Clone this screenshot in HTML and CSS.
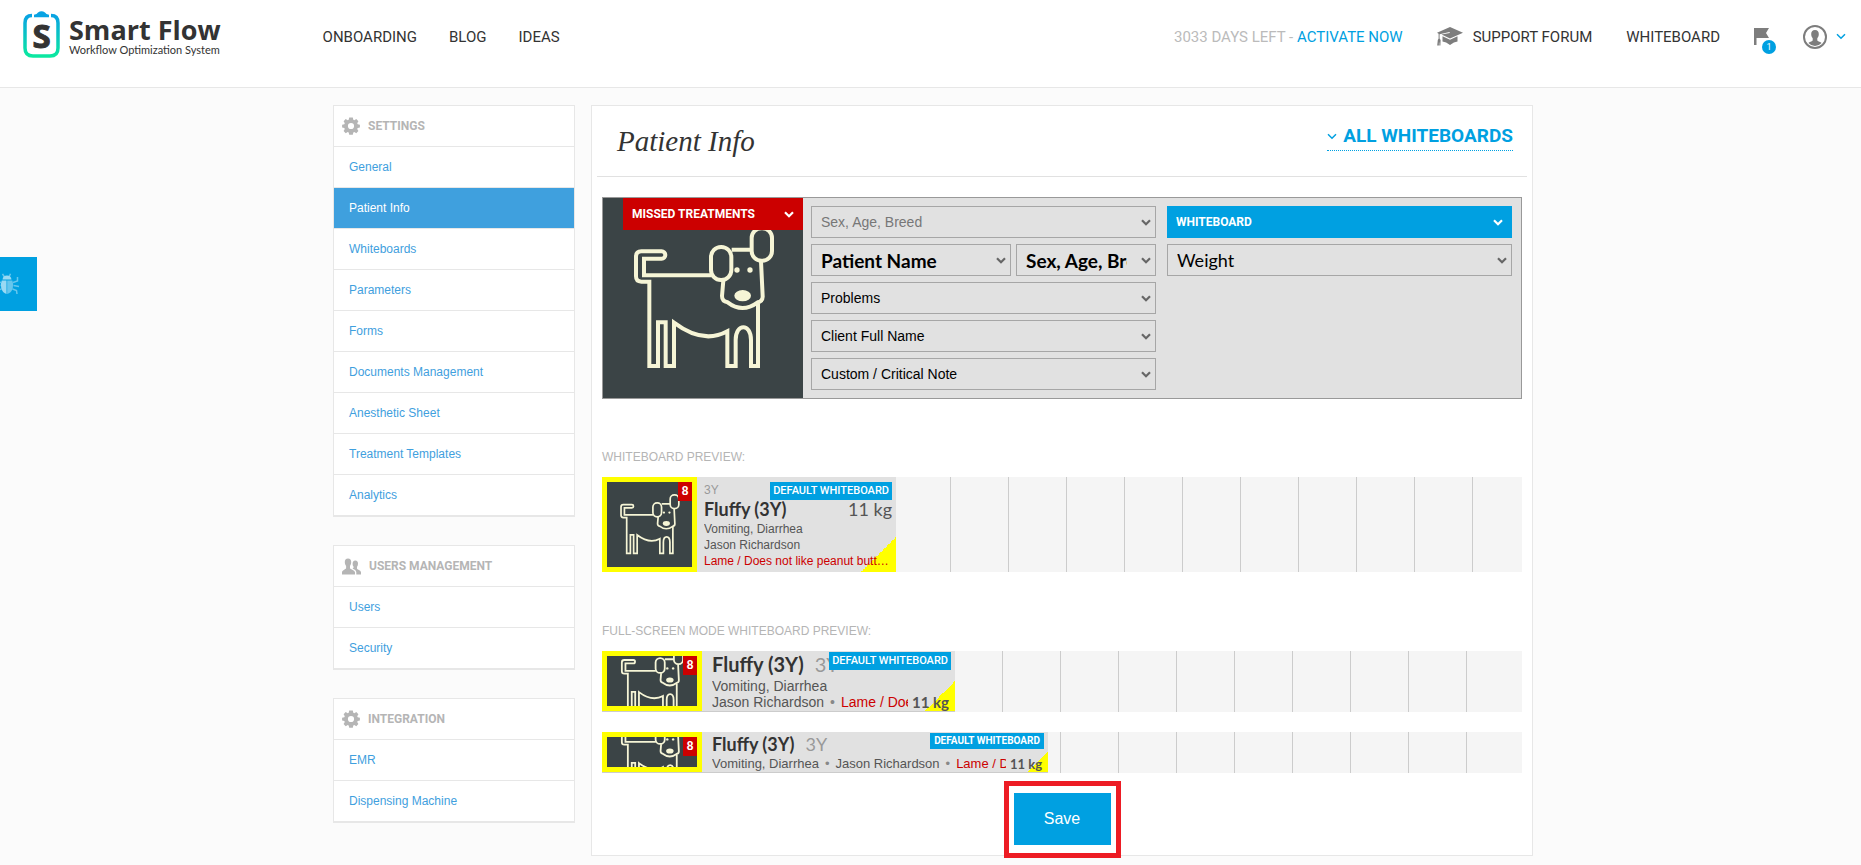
FILE: index.html
```html
<!DOCTYPE html>
<html lang="en">
<head>
    <meta charset="UTF-8">
    <meta name="viewport" content="width=device-width, initial-scale=1.0">
    <title>Smart Flow - Patient Info</title>
    <link rel="stylesheet" href="styles.css">
</head>
<body>
    <!-- Shared shapes -->
    <svg class="sprite" width="0" height="0" aria-hidden="true">
        <symbol id="chevron" viewBox="0 0 10 7">
            <path d="M1 1.2 5 5.2 9 1.2" fill="none" stroke="currentColor"/>
        </symbol>
        <symbol id="gear" viewBox="0 0 18 18">
            <path fill="currentColor" fill-rule="evenodd" d="M7.2 0.6h3.6l.5 2.2 1 .5 2-1.2 2.1 2.1-1.2 2 .5 1 2.2.5v2.9l-2.2.5-.5 1 1.2 2-2.1 2.1-2-1.2-1 .5-.5 2.2H7.2l-.5-2.2-1-.5-2 1.2-2.1-2.1 1.2-2-.5-1L.1 10.6V7.7l2.2-.5.5-1-1.2-2 2.1-2.1 2 1.2 1-.5zM9 5.9a3.1 3.1 0 1 0 0 6.200a3.1 3.1 0 0 0 0-6.200z"/>
        </symbol>
        <symbol id="people" viewBox="0 0 19 17">
            <path fill="currentColor" d="M6 0.500c2.200 0 3.300 1.500 3.200 3.700-.1 2-.7 2.900-1.200 3.700v2.400c.6 1.200 5 1.800 5 4.200V16.500H0v-2c0-2.400 3.600-3 4.100-4.200V7.900C3.500 7.100 2.900 6.200 2.800 4.200 2.700 2 3.800.5 6 .5z"/>
            <path fill="currentColor" d="M13.300 2.500c1.900 0 2.800 1.300 2.700 3.200-.1 1.700-.5 2.400-1 3.100v1.900c.6 1 4 1.600 4 3.600v2.200h-4.700v-2.200c0-2-2.100-2.900-3.700-3.700l1-1V8.800c-.5-.7-1-1.400-1-3.100 0-1.900.8-3.200 2.700-3.200z"/>
        </symbol>
        <symbol id="dog" viewBox="0 0 600 600" preserveAspectRatio="xMidYMid slice">
            <rect width="600" height="600" fill="#3b4446"/>
            <g fill="none" stroke="#f6f5d6" stroke-width="12" stroke-linejoin="miter">
                <path d="M465 316V504H444V426C444 375 398 375 398 426V504H373V400Q300 440 213 374V504H188V373H165V504H139V251H115Q99 251 99 235V176Q99 160 115 160H176A11 11 0 0 1 176 182H123V232H325"/>
                <path d="M386 155H446M474 190L479 294Q480 310 464 313Q418 347 374 313Q357 310 357 294L361 247"/>
                <rect x="324" y="147" width="61" height="99" rx="30"/>
                <rect x="446" y="91" width="61" height="97" rx="29"/>
            </g>
            <g fill="#f6f5d6">
                <circle cx="402" cy="216" r="8"/>
                <circle cx="441" cy="216" r="8"/>
                <ellipse cx="419" cy="293" rx="25" ry="17"/>
            </g>
        </symbol>
    </svg>

    <header class="header">
        <a class="logo" href="#">
            <svg class="logo-icon" width="37" height="47" viewBox="0 0 37 47" aria-hidden="true">
                <defs>
                    <linearGradient id="clip" x1="0" y1="0" x2="0" y2="1">
                        <stop offset="0" stop-color="#09a3e3"/>
                        <stop offset="1" stop-color="#0be8a0"/>
                    </linearGradient>
                </defs>
                <path d="M9 4.500Q2 4.500 2 12V37Q2 45 10 45H27Q35 45 35 37V12Q35 4.500 28 4.500" fill="none" stroke="url(#clip)" stroke-width="3.500"/>
                <path d="M11 6.200V3.800Q14 3.400 15 1.500Q18.500-1 22 1.500Q23 3.400 26 3.800V6.200z" fill="#09a3e3"/>
                <text x="18.500" y="37" class="logo-letter">S</text>
            </svg>
            <span class="logo-text">
                <span class="logo-name">Smart Flow</span>
                <span class="logo-tagline">Workflow Optimization System</span>
            </span>
        </a>
        <nav class="nav">
            <a href="#">ONBOARDING</a>
            <a href="#">BLOG</a>
            <a href="#">IDEAS</a>
        </nav>
        <div class="nav-right">
            <span class="trial">3033 DAYS LEFT - <a href="#">ACTIVATE NOW</a></span>
            <a class="support" href="#">
                <svg width="26" height="19" viewBox="0 0 26 19" fill="#7d7d7d" aria-hidden="true">
                    <path d="M13 0 26 5.700 13 11.500 4.500 7.600 12.800 6 12.600 5 2.600 7.200V11.500L3.600 13 3.400 18.500H2.300V15.500H1.900V18.500H.2L.8 13 1.600 11.500V6.800L0 5.700z"/>
                    <path d="M5.500 9.300 13 12.700 20.500 9.300V14.500Q17 14.800 13 18 9 14.800 5.500 14.500z"/>
                </svg>
                SUPPORT FORUM
            </a>
            <a href="#">WHITEBOARD</a>
            <button class="flag" type="button" aria-label="Notifications">
                <svg width="15" height="17" viewBox="0 0 15 17" fill="#7d7d7d" aria-hidden="true">
                    <path d="M0 0H15L12 5 15 10H2.500V17H0z"/>
                </svg>
                <span class="flag-count">1</span>
            </button>
            <button class="account" type="button" aria-label="Account">
                <svg width="24" height="24" viewBox="0 0 24 24" aria-hidden="true">
                    <circle cx="12" cy="12" r="11" fill="none" stroke="#7d7d7d" stroke-width="2"/>
                    <path fill="#7d7d7d" d="M12 5c2.600 0 3.900 1.700 3.800 4.200-.1 2.100-.8 3.200-1.500 4v2.300c.9 1 3.300 1.400 4.300 2.600A9 9 0 0 1 12 21a9 9 0 0 1-6.600-2.900c1-1.200 3.400-1.600 4.300-2.600v-2.300c-.7-.8-1.400-1.900-1.500-4C8.100 6.700 9.400 5 12 5z"/>
                </svg>
                <svg class="chevron" width="10" height="7"><use href="#chevron"/></svg>
            </button>
        </div>
    </header>

    <button class="bug-tab" type="button" aria-label="Report a bug">
        <svg width="28" height="22" viewBox="0 0 28 22" aria-hidden="true">
            <g fill="none" stroke="#66c6ed" stroke-width="1.500">
                <path d="M9 9.500 4 8 3.500 4M8.500 12.500H2M9.500 16 5 17.500 4.500 21M21 9.500 25.500 8 25.500 4M21.500 12.500 27 13.500M20.500 16 24.500 17.500 25 21M12.500 4 10.500.8M17 4 18.500.8"/>
            </g>
            <path fill="#99d9f3" d="M10.500 6.500Q11 2.500 15 2.500T19.500 6.500zM14.500 7.500H9.800Q8 11 9.300 15.500 11 20 14.500 21z"/>
            <path fill="#66c6ed" d="M15.200 7.500H20.300Q22 11 20.700 15.500 19 20 15.200 21z"/>
        </svg>
    </button>

    <div class="container">
        <aside class="sidebar">
            <nav class="menu">
                <h2><svg width="18" height="18"><use href="#gear"/></svg>SETTINGS</h2>
                <a href="#">General</a>
                <a class="active" href="#">Patient Info</a>
                <a href="#">Whiteboards</a>
                <a href="#">Parameters</a>
                <a href="#">Forms</a>
                <a href="#">Documents Management</a>
                <a href="#">Anesthetic Sheet</a>
                <a href="#">Treatment Templates</a>
                <a href="#">Analytics</a>
            </nav>
            <nav class="menu">
                <h2><svg width="19" height="17"><use href="#people"/></svg>USERS MANAGEMENT</h2>
                <a href="#">Users</a>
                <a href="#">Security</a>
            </nav>
            <nav class="menu">
                <h2><svg width="18" height="18"><use href="#gear"/></svg>INTEGRATION</h2>
                <a href="#">EMR</a>
                <a href="#">Dispensing Machine</a>
            </nav>
        </aside>

        <main class="content">
            <div class="content-header">
                <h1>Patient Info</h1>
                <button class="all-boards" type="button">
                    <svg class="chevron" width="10" height="7"><use href="#chevron"/></svg>
                    ALL WHITEBOARDS
                </button>
            </div>

            <form class="editor">
                <div class="photo">
                    <svg class="photo-dog" width="200" height="200"><use href="#dog"/></svg>
                    <div class="field field-missed">
                        <select aria-label="Photo badge"><option>MISSED TREATMENTS</option></select>
                        <svg class="chevron" width="10" height="7"><use href="#chevron"/></svg>
                    </div>
                </div>
                <div class="fields">
                    <div class="field field-muted">
                        <select aria-label="Top line"><option>Sex, Age, Breed</option></select>
                        <svg class="chevron" width="10" height="7"><use href="#chevron"/></svg>
                    </div>
                    <div class="field-row">
                        <div class="field field-name">
                            <select aria-label="Name line"><option>Patient Name</option></select>
                            <svg class="chevron" width="10" height="7"><use href="#chevron"/></svg>
                        </div>
                        <div class="field field-name">
                            <select aria-label="Name details"><option>Sex, Age, Breed</option></select>
                            <svg class="chevron" width="10" height="7"><use href="#chevron"/></svg>
                        </div>
                    </div>
                    <div class="field">
                        <select aria-label="Line 3"><option>Problems</option></select>
                        <svg class="chevron" width="10" height="7"><use href="#chevron"/></svg>
                    </div>
                    <div class="field">
                        <select aria-label="Line 4"><option>Client Full Name</option></select>
                        <svg class="chevron" width="10" height="7"><use href="#chevron"/></svg>
                    </div>
                    <div class="field">
                        <select aria-label="Line 5"><option>Custom / Critical Note</option></select>
                        <svg class="chevron" width="10" height="7"><use href="#chevron"/></svg>
                    </div>
                </div>
                <div class="fields">
                    <div class="field field-board">
                        <select aria-label="Right badge"><option>WHITEBOARD</option></select>
                        <svg class="chevron" width="10" height="7"><use href="#chevron"/></svg>
                    </div>
                    <div class="field field-weight">
                        <select aria-label="Right value"><option>Weight</option></select>
                        <svg class="chevron" width="10" height="7"><use href="#chevron"/></svg>
                    </div>
                </div>
            </form>

            <section class="preview">
                <h3>WHITEBOARD PREVIEW:</h3>
                <div class="board">
                    <div class="patient patient-large">
                        <div class="thumb">
                            <svg><use href="#dog"/></svg>
                            <span class="missed">8</span>
                        </div>
                        <div class="details">
                            <div class="extra">3Y</div>
                            <div class="name-line"><b>Fluffy (3Y)</b><span class="weight">11 kg</span></div>
                            <div class="line">Vomiting, Diarrhea</div>
                            <div class="line">Jason Richardson</div>
                            <div class="line note">Lame / Does not like peanut butter treats</div>
                        </div>
                        <span class="tag">DEFAULT WHITEBOARD</span>
                    </div>
                </div>
            </section>

            <section class="preview preview-fullscreen">
                <h3>FULL-SCREEN MODE WHITEBOARD PREVIEW:</h3>
                <div class="board board-wide">
                    <div class="patient patient-medium">
                        <div class="thumb">
                            <svg><use href="#dog"/></svg>
                            <span class="missed">8</span>
                        </div>
                        <div class="details">
                            <div class="name-line"><b>Fluffy (3Y)</b><span class="age">3Y</span></div>
                            <div class="line">Vomiting, Diarrhea</div>
                            <div class="line-split">
                                <div class="line">Jason Richardson<i>•</i><span class="note">Lame / Does not like peanut butter treats</span></div>
                                <span class="weight">11 kg</span>
                            </div>
                        </div>
                        <span class="tag">DEFAULT WHITEBOARD</span>
                    </div>
                </div>
                <div class="board board-wide">
                    <div class="patient patient-small">
                        <div class="thumb">
                            <svg><use href="#dog"/></svg>
                            <span class="missed">8</span>
                        </div>
                        <div class="details">
                            <div class="name-line"><b>Fluffy (3Y)</b><span class="age">3Y</span></div>
                            <div class="line-split">
                                <div class="line">Vomiting, Diarrhea<i>•</i>Jason Richardson<i>•</i><span class="note">Lame / Does not like peanut butter treats</span></div>
                                <span class="weight">11 kg</span>
                            </div>
                        </div>
                        <span class="tag">DEFAULT WHITEBOARD</span>
                    </div>
                </div>
            </section>

            <div class="save-frame">
                <button class="save" type="button">Save</button>
            </div>
        </main>
    </div>
</body>
</html>
```
FILE: styles.css
```css
:root {
    --blue: #00a0e1;
    --link: #3fa0de;
    --red: #cc0000;
    --yellow: #ffff00;
    --text: #333333;
    --panel: #e1e1e1;
    --border: #e7e7e7;
    --ui-font: Roboto, sans-serif;
    --name-font: Lato, sans-serif;
}

* {
    margin: 0;
    padding: 0;
    box-sizing: border-box;
}

body {
    font-family: "Liberation Sans", Arial, sans-serif;
    font-size: 12px;
    line-height: 16px;
    color: var(--text);
    background-color: #fbfbfb;
}

a {
    text-decoration: none;
}

button {
    border: none;
    background: none;
    font-family: inherit;
    cursor: pointer;
}

svg {
    display: block;
    flex: none;
}

.sprite {
    position: absolute;
}

.chevron {
    stroke-width: 1.5;
}

/* Header */
.header {
    display: flex;
    align-items: center;
    padding: 11px 15px 25px 23px;
    min-height: 88px;
    background-color: #fff;
    border-bottom: 1px solid var(--border);
    font-family: var(--ui-font);
    font-size: 15px;
}

.header a {
    color: var(--text);
}

.logo {
    display: flex;
    align-self: flex-start;
    gap: 9px;
}

.logo-letter {
    font: bold 33px "Open Sans", sans-serif;
    text-anchor: middle;
    fill: #333;
    stroke: #333;
}

.logo-text {
    display: flex;
    flex-direction: column;
    padding-top: 5px;
}

.logo-name {
    font: bold 27px/28px "Open Sans", sans-serif;
}

.logo-tagline {
    font: 11px/12px Lato, sans-serif;
}

.nav {
    display: flex;
    gap: 32px;
    margin-left: 102px;
}

.nav-right {
    display: flex;
    align-items: center;
    gap: 34px;
    margin-left: auto;
}

.trial {
    color: #bbb;
}

.header .trial a {
    color: var(--blue);
}

.support {
    display: flex;
    align-items: center;
    gap: 10px;
}

.flag {
    position: relative;
}

.flag-count {
    position: absolute;
    left: 8px;
    top: 12px;
    width: 14px;
    height: 14px;
    border-radius: 50%;
    background-color: var(--blue);
    color: #fff;
    font-size: 9px;
    line-height: 14px;
}

.account {
    display: flex;
    align-items: center;
    gap: 9px;
    color: var(--blue);
}

.bug-tab {
    position: absolute;
    left: 0;
    top: 257px;
    width: 37px;
    height: 54px;
    overflow: hidden;
    background-color: var(--blue);
}

.bug-tab svg {
    margin-left: -8px;
}

/* Layout */
.container {
    display: flex;
    align-items: flex-start;
    gap: 16px;
    max-width: 1205px;
    margin: 0 auto;
    padding: 17px 0 7px 5px;
}

.sidebar {
    flex: 0 0 242px;
    display: flex;
    flex-direction: column;
    gap: 28px;
}

.menu {
    background-color: #fff;
    border: 1px solid var(--border);
    border-bottom-width: 2px;
}

.menu h2 {
    display: flex;
    align-items: center;
    gap: 8px;
    height: 40px;
    padding-left: 8px;
    font-family: var(--ui-font);
    font-size: 12px;
    color: #b5b5b5;
}

.menu a {
    display: block;
    padding: 12px 15px;
    border-top: 1px solid var(--border);
    color: var(--link);
}

.menu a.active {
    background-color: var(--link);
    color: #fff;
}

.content {
    flex: 1;
    min-width: 0;
    background-color: #fff;
    border: 1px solid var(--border);
}

.content-header {
    display: flex;
    justify-content: space-between;
    align-items: flex-start;
    height: 71px;
    margin: 0 5px;
    padding: 15px 14px 0 20px;
    border-bottom: 1px solid #e1e1e1;
}

h1 {
    font: italic 29px/40px "Liberation Serif", Georgia, serif;
}

.all-boards {
    display: flex;
    align-items: center;
    gap: 6px;
    padding-top: 1px;
    border-bottom: 1px dotted var(--blue);
    color: var(--blue);
    font: bold 19px/28px var(--ui-font);
}

/* Patient card editor */
.editor {
    display: flex;
    gap: 8px;
    margin: 20px 10px 0;
    padding-right: 9px;
    background-color: var(--panel);
    border: 1px solid #999;
}

.photo {
    position: relative;
    flex: none;
}

.fields {
    flex: 1;
    display: flex;
    flex-direction: column;
    gap: 6px;
    padding: 8px 0;
}

.fields + .fields {
    margin-left: 3px;
}

.field-row {
    display: grid;
    grid-template-columns: 10fr 7fr;
    gap: 5px;
}

.field {
    position: relative;
    color: #666;
}

.field select {
    display: block;
    width: 100%;
    height: 32px;
    padding: 0 28px 0 9px;
    appearance: none;
    background-color: transparent;
    border: 1px solid #a6a6a6;
    border-radius: 0;
    color: #000;
    font: 14px "Liberation Sans", Arial, sans-serif;
}

.field .chevron {
    position: absolute;
    right: 5px;
    top: 13px;
    stroke-width: 2.2;
    pointer-events: none;
}

.field-muted select {
    color: #777;
}

.field-name select {
    font: bold 19px var(--name-font);
}

.field-weight select {
    font: 18px var(--name-font);
}

.field-missed,
.field-board {
    color: #fff;
}

.field-missed select,
.field-board select {
    border: none;
    color: #fff;
    font: bold 12px var(--ui-font);
}

.field-missed .chevron,
.field-board .chevron {
    right: 9px;
}

.field-missed {
    position: absolute;
    top: 0;
    right: 0;
    width: 180px;
    background-color: var(--red);
}

.field-board {
    background-color: var(--blue);
}

/* Previews */
.preview {
    margin: 50px 10px 0;
}

.preview-fullscreen {
    margin-top: 51px;
}

.preview h3 {
    padding-bottom: 12px;
    font-size: 12px;
    font-weight: normal;
    color: #b5b5b5;
}

.board {
    background: #f5f5f5 linear-gradient(to right, #ccc 1px, transparent 1px) 0 0 / 58px 100%;
}

.board-wide {
    background-position-x: 52px;
}

.board + .board {
    margin-top: 20px;
}

.patient {
    position: relative;
    display: flex;
    background-color: var(--panel);
}

.thumb {
    position: relative;
    flex: none;
    width: 100px;
    padding: 5px;
    background-color: var(--yellow);
}

.thumb svg {
    width: 100%;
    height: 100%;
}

.missed {
    position: absolute;
    top: 5px;
    right: 5px;
    width: 14px;
    background-color: var(--red);
    color: #fff;
    font-weight: bold;
    line-height: 19px;
    text-align: center;
}

.details {
    flex: 1;
    min-width: 0;
    padding: 0 6px 0 10px;
    background: linear-gradient(135deg, transparent 50%, var(--yellow) 50%) no-repeat right bottom / 30px 30px;
    color: #555;
}

.extra,
.age {
    color: #999;
}

.name-line {
    display: flex;
    gap: 11px;
    font-family: var(--name-font);
    font-size: 18px;
}

.name-line b {
    color: var(--text);
}

.line {
    flex: 1;
    overflow: hidden;
    white-space: nowrap;
}

.line i {
    margin: 0 6px;
    color: #888;
    font-style: normal;
}

.line-split {
    display: flex;
    gap: 4px;
}

.note {
    color: var(--red);
}

.weight {
    font-family: var(--name-font);
    font-weight: bold;
}

.tag {
    position: absolute;
    top: 1px;
    right: 4px;
    padding: 0 3px;
    background-color: var(--blue);
    color: #fff;
    font: 500 11px/18px var(--ui-font);
}

.patient-large {
    width: 294px;
    height: 95px;
}

.patient-large .thumb {
    width: 95px;
}

.patient-large .details {
    padding: 5px 4px 0 7px;
    background-size: 35px 35px;
}

.patient-large .name-line {
    justify-content: space-between;
    line-height: 23px;
}

.patient-large .weight {
    font-weight: normal;
}

.patient-large .note {
    text-overflow: ellipsis;
}

.patient-large .tag {
    top: 5px;
}

.patient-medium,
.patient-small {
    border-bottom: 1px solid #ccc;
}

.patient-medium {
    width: 353px;
    height: 61px;
}

.patient-medium .name-line {
    font-size: 20px;
    line-height: 27px;
}

.patient-medium .line {
    font-size: 14px;
}

.patient-medium .weight {
    font-size: 15px;
}

.patient-small {
    width: 446px;
    height: 41px;
}

.patient-small .details {
    background-size: 20px 20px;
}

.patient-small .name-line {
    line-height: 24px;
}

.patient-small .line {
    font-size: 13px;
}

.patient-small .weight {
    font-size: 13px;
}

.patient-small .tag {
    padding: 0 4px;
    font-size: 10px;
    font-weight: bold;
    line-height: 16px;
}

/* Save */
.save-frame {
    width: fit-content;
    margin: 8px auto -3px;
    padding: 7px 5px 8px;
    border: 5px solid #ed1c24;
}

.save {
    display: block;
    width: 97px;
    height: 52px;
    background-color: var(--blue);
    color: #fff;
    font-size: 16px;
}
```
